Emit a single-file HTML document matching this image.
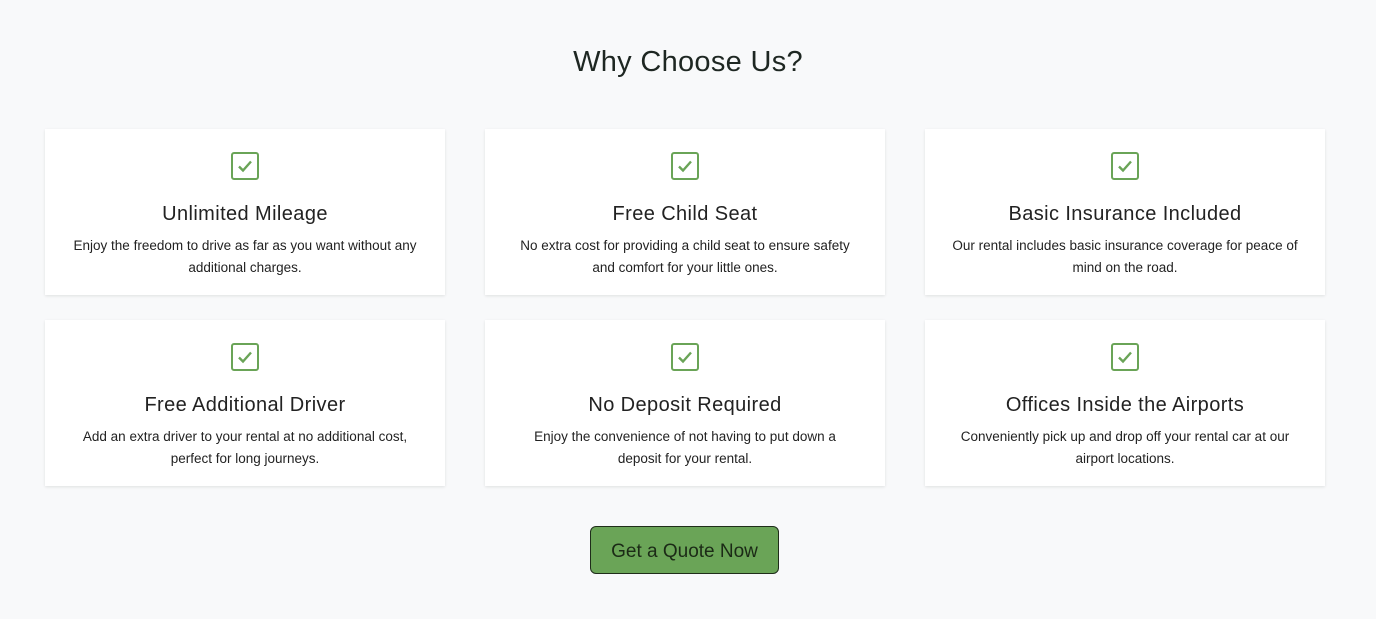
<!DOCTYPE html>
<html><head><style>
body{margin:0;background:#f8f9fa;font-family:"Liberation Sans",sans-serif;width:1376px;height:619px;overflow:hidden;position:relative}
h1{position:absolute;top:46px;left:0;width:1376px;text-align:center;margin:0;font-weight:400;font-size:29px;color:#1e2722;letter-spacing:.3px}
.card{position:absolute;width:400px;height:166px;background:#fff;box-shadow:0 1px 3px rgba(0,0,0,.1);text-align:center}
.ic{position:absolute;left:186px;top:23px;width:24px;height:24px;border:2px solid #6aa457;border-radius:3px}
.ic svg{position:absolute;left:3px;top:3px}
.card h3{position:absolute;top:74px;left:0;width:100%;margin:0;font-weight:400;font-size:20px;color:#222;letter-spacing:.4px}
.card p{position:absolute;top:106px;left:10px;right:10px;margin:0;font-size:13.5px;line-height:22px;color:#222;white-space:nowrap}
.btn{position:absolute;left:590px;top:526px;width:187px;height:46px;background:#6aa457;border:1px solid #1f2d1a;border-radius:6px;font-size:19px;color:#1b2a16;text-align:center;line-height:50px}
</style></head><body>
<h1>Why Choose Us?</h1>
<div class="card" style="left:45px;top:129px"><div class="ic"><svg width="18" height="18"><path d="M3 9.5l4 4 8-9" fill="none" stroke="#6aa457" stroke-width="2.4"/></svg></div><h3>Unlimited Mileage</h3><p>Enjoy the freedom to drive as far as you want without any<br>additional charges.</p></div>
<div class="card" style="left:485px;top:129px"><div class="ic"><svg width="18" height="18"><path d="M3 9.5l4 4 8-9" fill="none" stroke="#6aa457" stroke-width="2.4"/></svg></div><h3>Free Child Seat</h3><p>No extra cost for providing a child seat to ensure safety<br>and comfort for your little ones.</p></div>
<div class="card" style="left:925px;top:129px"><div class="ic"><svg width="18" height="18"><path d="M3 9.5l4 4 8-9" fill="none" stroke="#6aa457" stroke-width="2.4"/></svg></div><h3>Basic Insurance Included</h3><p>Our rental includes basic insurance coverage for peace of<br>mind on the road.</p></div>
<div class="card" style="left:45px;top:320px"><div class="ic"><svg width="18" height="18"><path d="M3 9.5l4 4 8-9" fill="none" stroke="#6aa457" stroke-width="2.4"/></svg></div><h3>Free Additional Driver</h3><p>Add an extra driver to your rental at no additional cost,<br>perfect for long journeys.</p></div>
<div class="card" style="left:485px;top:320px"><div class="ic"><svg width="18" height="18"><path d="M3 9.5l4 4 8-9" fill="none" stroke="#6aa457" stroke-width="2.4"/></svg></div><h3>No Deposit Required</h3><p>Enjoy the convenience of not having to put down a<br>deposit for your rental.</p></div>
<div class="card" style="left:925px;top:320px"><div class="ic"><svg width="18" height="18"><path d="M3 9.5l4 4 8-9" fill="none" stroke="#6aa457" stroke-width="2.4"/></svg></div><h3>Offices Inside the Airports</h3><p>Conveniently pick up and drop off your rental car at our<br>airport locations.</p></div>
<div class="btn">Get a Quote Now</div>
</body></html>
